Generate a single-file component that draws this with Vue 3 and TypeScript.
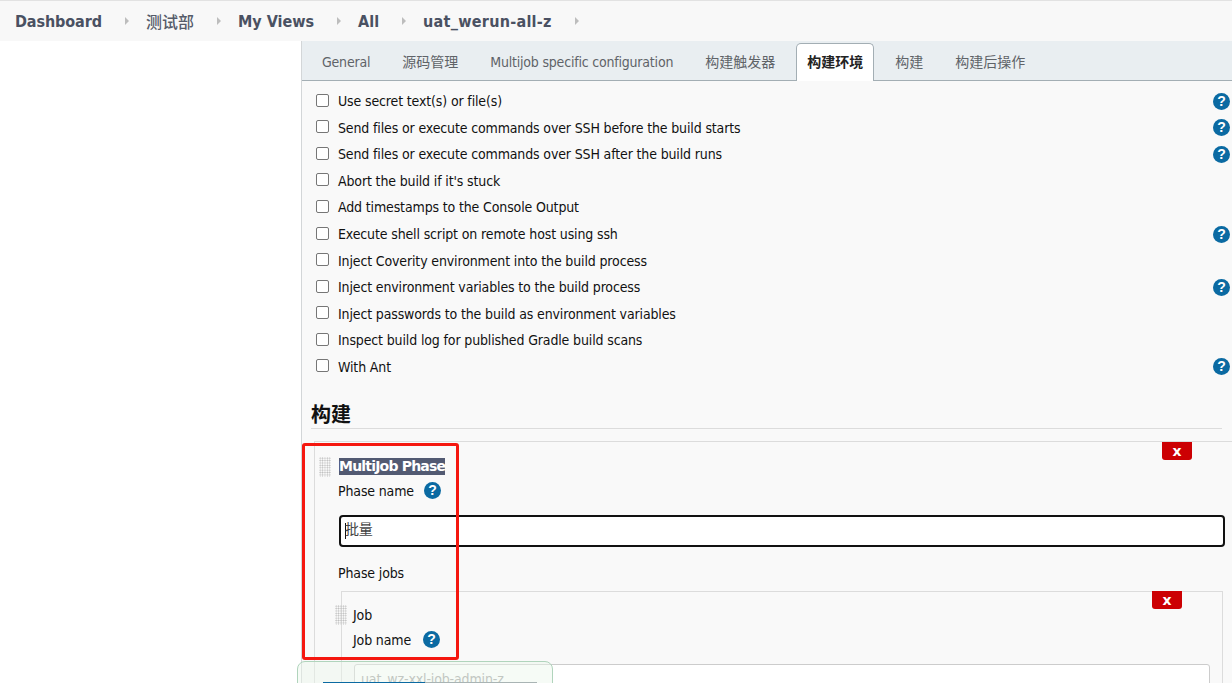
<script setup lang="ts">
const crumbs = [
  { label: 'Dashboard', cls: 'c1' },
  { label: '测试部', cls: 'c2' },
  { label: 'My Views', cls: 'c3' },
  { label: 'All', cls: 'c4' },
  { label: 'uat_werun-all-z', cls: 'c5' },
]
const tabs = [
  { t: 'General', latin: true },
  { t: '源码管理', latin: false },
  { t: 'Multijob specific configuration', latin: true },
  { t: '构建触发器', latin: false },
  { t: '构建环境', latin: false },
  { t: '构建', latin: false },
  { t: '构建后操作', latin: false },
]
const rows = [
  { t: 'Use secret text(s) or file(s)', h: true },
  { t: 'Send files or execute commands over SSH before the build starts', h: true },
  { t: 'Send files or execute commands over SSH after the build runs', h: true },
  { t: "Abort the build if it's stuck", h: false },
  { t: 'Add timestamps to the Console Output', h: false },
  { t: 'Execute shell script on remote host using ssh', h: true },
  { t: 'Inject Coverity environment into the build process', h: false },
  { t: 'Inject environment variables to the build process', h: true },
  { t: 'Inject passwords to the build as environment variables', h: false },
  { t: 'Inspect build log for published Gradle build scans', h: false },
  { t: 'With Ant', h: true },
]
</script>

<template>
  <div class="page">
    <nav class="crumbs">
      <template v-for="c in crumbs" :key="c.label">
        <span class="crumb" :class="c.cls">{{ c.label }}</span>
        <span class="arrow"></span>
      </template>
    </nav>
    <div class="main">
      <aside class="side"></aside>
      <section class="panel">
        <div class="tabs">
          <span v-for="(t, i) in tabs" :key="t.t" class="tab" :class="{ active: i === 4, latin: t.latin }">{{ t.t }}</span>
        </div>
        <div class="body">
          <div v-for="r in rows" :key="r.t" class="row">
            <span class="box"></span>
            <span class="label">{{ r.t }}</span>
            <svg v-if="r.h" class="help" viewBox="0 0 17 17"><circle cx="8.5" cy="8.5" r="8.5" fill="#0b6aa2"/><text x="8.5" y="13.2" text-anchor="middle" class="q">?</text></svg>
          </div>
          <h3 class="heading">构建</h3>
          <div class="phase">
            <button class="x">x</button>
            <div class="title-line"><span class="grip"></span><span class="sel">MultiJob Phase</span></div>
            <div class="field-label">Phase name <svg class="help inline" viewBox="0 0 17 17"><circle cx="8.5" cy="8.5" r="8.5" fill="#0b6aa2"/><text x="8.5" y="13.2" text-anchor="middle" class="q">?</text></svg></div>
            <div class="input focus"><i class="caret"></i><span class="val">批量</span></div>
            <div class="jobs-label">Phase jobs</div>
            <div class="job">
              <button class="x jx">x</button>
              <div class="job-line"><span class="grip"></span>Job</div>
              <div class="job-name">Job name <svg class="help inline wide" viewBox="0 0 17 17"><circle cx="8.5" cy="8.5" r="8.5" fill="#0b6aa2"/><text x="8.5" y="13.2" text-anchor="middle" class="q">?</text></svg></div>
              <div class="input job-input">uat_wz-xxl-job-admin-z</div>
            </div>
          </div>
        </div>
      </section>
    </div>
    <div class="redbox"></div>
    <div class="toast"><span class="toast-bar"></span></div>
  </div>
</template>

<style>
html, body { margin: 0; background: #fff; }
</style>

<style scoped>
.page {
  position: relative;
  width: 1232px;
  height: 683px;
  overflow: hidden;
  font-family: "DejaVu Sans", "Noto Sans CJK SC", sans-serif;
  font-stretch: condensed;
  font-size: 14px;
  color: #111;
  background: #fff;
}
.crumbs {
  display: flex;
  align-items: center;
  height: 40px;
  border-top: 1px solid #e2e2e2;
  background: #f8f8f8;
  padding-left: 15px;
}
.crumb {
  font-size: 16px;
  font-weight: 700;
  color: #4a5162;
}
.c1 { letter-spacing: -0.1px; }
.c2 { font-weight: 500; color: #555b69; }
.c5 { letter-spacing: 0.27px; }
.arrow {
  width: 0;
  height: 0;
  border-left: 4px solid #bdbdbd;
  border-top: 4px solid transparent;
  border-bottom: 4px solid transparent;
  margin: 0 17px 0 23px;
}
.main { display: flex; height: 642px; }
.side { width: 301px; flex: none; }
.panel {
  flex: 1;
  border-left: 1px solid #d3d6d8;
  background: #f9f9f9;
  min-width: 0;
}
.tabs {
  display: flex;
  align-items: flex-end;
  height: 39px;
  padding-left: 4px;
  background: #e9eef1;
  border-bottom: 1px solid #a3aeb4;
}
.tab {
  height: 38px;
  line-height: 40px;
  padding: 0 16px;
  color: #5f6368;
  box-sizing: border-box;
}
.tab.latin { letter-spacing: -0.2px; }
.tab.active {
  background: #fff;
  color: #222;
  font-weight: 600;
  line-height: 37px;
  border: 1px solid #a3aeb4;
  border-bottom: none;
  border-radius: 5px 5px 0 0;
  padding: 0 10px;
  margin: 0 5px -1px;
}
.body { padding-top: 7px; }
.row {
  display: flex;
  align-items: center;
  height: 26.55px;
  padding-left: 14px;
  padding-right: 2px;
}
.box {
  width: 11px;
  height: 11px;
  border: 1px solid #767676;
  border-radius: 2px;
  background: #fff;
  margin-right: 9px;
  flex: none;
  position: relative;
  top: -1px;
}
.label { flex: 1; white-space: nowrap; letter-spacing: -0.14px; }
.help { width: 17px; height: 17px; flex: none; }
.help.inline { vertical-align: -3px; margin-left: 6px; }
.help.wide { margin-left: 8px; }
.q { font: 700 14px "Liberation Sans", sans-serif; fill: #fff; }
.heading {
  margin: 19.6px 10px 0 9px;
  font-size: 20px;
  line-height: 30px;
  font-weight: 700;
  color: #111;
  border-bottom: 1px solid #dcdcdc;
  height: 28px;
}
.phase {
  position: relative;
  margin-top: 12px;
  margin-left: 12px;
  border-top: 1px solid #dcdcdc;
  border-left: 1px solid #dcdcdc;
  padding-left: 24px;
  height: 260px;
  letter-spacing: -0.14px;
}
.x {
  position: absolute;
  top: 0;
  right: 40px;
  width: 30px;
  height: 18px;
  padding: 0;
  border: none;
  border-radius: 0 0 3px 3px;
  background: #cc0003;
  color: #fff;
  font: 700 14px/16px "DejaVu Sans", sans-serif;
}
.title-line { display: flex; align-items: center; height: 20px; margin-top: 15px; position: relative; }
.grip {
  position: absolute;
  left: -20px;
  top: 0;
  width: 12px;
  height: 20px;
  background-image: radial-gradient(#bcbcbc 0.75px, transparent 0.85px);
  background-size: 2.4px 2.4px;
}
.sel {
  background: #525a72;
  color: #fff;
  font: 700 14px/17px "DejaVu Sans", sans-serif;
  font-stretch: normal;
  letter-spacing: -0.8px;
}
.field-label { margin: 2px 0 0 -1px; height: 24px; line-height: 24px; }
.input {
  box-sizing: border-box;
  background: #fff;
  white-space: nowrap;
}
.focus {
  margin-top: 12px;
  width: 886px;
  height: 32px;
  border: 2px solid #111;
  border-radius: 4px;
  line-height: 27px;
  padding-left: 4px;
  display: flex;
  align-items: center;
  color: #444;
}
.val { padding-bottom: 2px; }
.caret { display: block; width: 1px; height: 16px; background: #111; margin-right: -1px; }
.jobs-label { margin: 15px 0 0 -1px; height: 22px; line-height: 22px; }
.job {
  position: relative;
  margin-top: 7px;
  margin-left: 2px;
  width: 882px;
  height: 120px;
  border: 1px solid #dcdcdc;
  padding-left: 12px;
  box-sizing: border-box;
}
.jx { top: -1px; right: 40px; }
.job-line { position: relative; margin: 13px 0 0 -1px; height: 20px; line-height: 20px; }
.job-line .grip { left: -18px; }
.job-name { margin: 3px 0 0 -1px; height: 24px; line-height: 24px; }
.job-input {
  margin-top: 12px;
  width: 856px;
  height: 34px;
  border: 1px solid #ccc;
  border-radius: 3px;
  padding-left: 6px;
  line-height: 29px;
  color: #a0a0a0;
}
.redbox {
  position: absolute;
  left: 302px;
  top: 443px;
  width: 157px;
  height: 217px;
  box-sizing: border-box;
  border: 3px solid #f5170f;
  border-radius: 3px;
}
.toast {
  position: absolute;
  left: 297px;
  top: 661px;
  width: 256px;
  height: 40px;
  box-sizing: border-box;
  border: 1px solid #b0d4bc;
  border-radius: 8px;
  background: rgba(236, 246, 236, 0.45);
}
.toast-bar {
  position: absolute;
  left: 25px;
  top: 19.5px;
  width: 214px;
  height: 1.5px;
  background: linear-gradient(to right, #0b6aa2 0, #0b6aa2 47.5%, #a9b4b4 47.5%, #a9b4b4 100%);
}
</style>
